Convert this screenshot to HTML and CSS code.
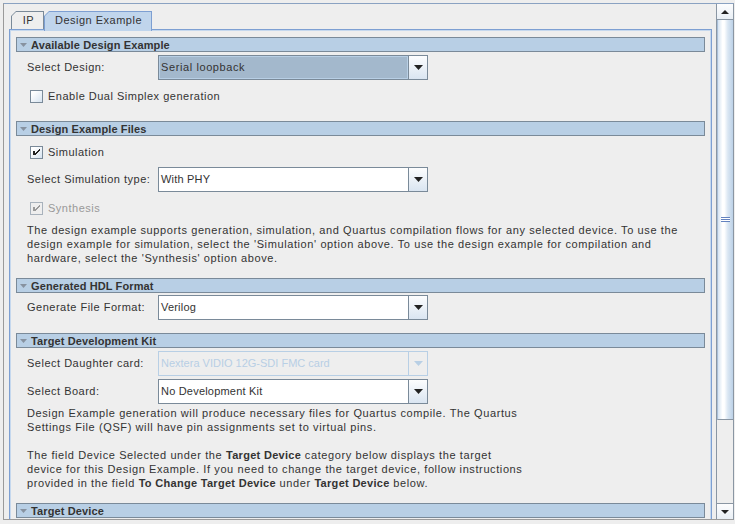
FILE: index.html
```html
<!DOCTYPE html>
<html>
<head>
<meta charset="utf-8">
<link rel="stylesheet" href="styles.css">
</head>
<body>
<div class="frame">
  <div class="viewport">
    <div class="tabs">
      <div class="tab"><span>IP</span></div>
      <div class="tab sel"><span>Design Example</span></div>
    </div>
    <div class="panel">
      <div class="hdr"><svg class="tri" width="7" height="4" viewBox="0 0 7 4"><polygon points="0,0 7,0 3.5,4"/></svg>Available Design Example</div>
      <div class="row m3"><label>Select Design:</label>
        <div class="combo focus"><div class="val">Serial loopback</div><div class="arrow"><svg width="9" height="5" viewBox="0 0 9 5"><polygon points="0,0 9,0 4.5,5"/></svg></div></div>
      </div>
      <div class="check m9"><span class="box"></span><span class="lbl">Enable Dual Simplex generation</span></div>

      <div class="hdr m17"><svg class="tri" width="7" height="4" viewBox="0 0 7 4"><polygon points="0,0 7,0 3.5,4"/></svg>Design Example Files</div>
      <div class="check m9"><span class="box"><svg width="11" height="11" viewBox="1 1 11 11" shape-rendering="crispEdges"><path d="M3 5h2v4H3z M9 3h1v2H9z M8 4h1v2H8z M7 5h1v2H7z M6 6h1v2H6z M5 7h1v2H5z"/></svg></span><span class="lbl">Simulation</span></div>
      <div class="row m7"><label>Select Simulation type:</label>
        <div class="combo"><div class="val">With PHY</div><div class="arrow"><svg width="9" height="5" viewBox="0 0 9 5"><polygon points="0,0 9,0 4.5,5"/></svg></div></div>
      </div>
      <div class="check disabled m9"><span class="box"><svg width="11" height="11" viewBox="1 1 11 11" shape-rendering="crispEdges"><path d="M3 5h2v4H3z M9 3h1v2H9z M8 4h1v2H8z M7 5h1v2H7z M6 6h1v2H6z M5 7h1v2H5z"/></svg></span><span class="lbl">Synthesis</span></div>
      <p class="desc m7">The design example supports generation, simulation, and Quartus compilation flows for any selected device. To use the<br>design example for simulation, select the 'Simulation' option above. To use the design example for compilation and<br>hardware, select the 'Synthesis' option above.</p>

      <div class="hdr m13"><svg class="tri" width="7" height="4" viewBox="0 0 7 4"><polygon points="0,0 7,0 3.5,4"/></svg>Generated HDL Format</div>
      <div class="row m2"><label>Generate File Format:</label>
        <div class="combo"><div class="val">Verilog</div><div class="arrow"><svg width="9" height="5" viewBox="0 0 9 5"><polygon points="0,0 9,0 4.5,5"/></svg></div></div>
      </div>

      <div class="hdr m13"><svg class="tri" width="7" height="4" viewBox="0 0 7 4"><polygon points="0,0 7,0 3.5,4"/></svg>Target Development Kit</div>
      <div class="row m3"><label>Select Daughter card:</label>
        <div class="combo disabled"><div class="val">Nextera VIDIO 12G-SDI FMC card</div><div class="arrow"><svg width="9" height="5" viewBox="0 0 9 5"><polygon points="0,0 9,0 4.5,5"/></svg></div></div>
      </div>
      <div class="row m3"><label>Select Board:</label>
        <div class="combo"><div class="val">No Development Kit</div><div class="arrow"><svg width="9" height="5" viewBox="0 0 9 5"><polygon points="0,0 9,0 4.5,5"/></svg></div></div>
      </div>
      <p class="desc m2">Design Example generation will produce necessary files for Quartus compile. The Quartus<br>Settings File (QSF) will have pin assignments set to virtual pins.<br>&nbsp;<br>The field Device Selected under the <b>Target Device</b> category below displays the target<br>device for this Design Example. If you need to change the target device, follow instructions<br>provided in the field <b>To Change Target Device</b> under <b>Target Device</b> below.</p>

      <div class="hdr m13"><svg class="tri" width="7" height="4" viewBox="0 0 7 4"><polygon points="0,0 7,0 3.5,4"/></svg>Target Device</div>
    </div>
  </div>
  <div class="vscroll">
    <div class="sb-btn up"><svg width="8" height="4" viewBox="0 0 8 4"><polygon points="0,4 8,4 4,0"/></svg></div>
    <div class="thumb"><span class="grip"></span></div>
    <div class="track"></div>
    <div class="sb-btn down"><svg width="8" height="4" viewBox="0 0 8 4"><polygon points="0,0 8,0 4,4"/></svg></div>
  </div>
</div>
</body>
</html>
```
FILE: styles.css
```css
* { box-sizing: border-box; }
html, body { margin: 0; padding: 0; }
body {
  background: #eeeeee;
  font-family: "Liberation Sans", Arial, sans-serif;
  font-size: 11px;
  color: #333333;
  width: 735px;
  height: 524px;
  overflow: hidden;
}
.frame {
  display: flex;
  width: 731px;
  height: 517px;
  margin: 3px 0 0 3px;
  border: 1px solid #9a9a9a;
  border-top-color: #8aa2c2;
  border-right-color: #8a96a3;
}
.viewport {
  width: 712px;
  height: 515px;
  overflow: hidden;
  padding: 7px 0 0 5px;
}

/* tabs */
.tabs {
  display: flex;
  height: 18px;
  margin-left: 2px;
  position: relative;
  z-index: 2;
  align-items: flex-start;
}
.tab {
  position: relative;
  height: 18px;
  background: #7a8a99;
  clip-path: polygon(0 5px, 5px 0, 100% 0, 100% 100%, 0 100%);
  display: flex;
  align-items: center;
  justify-content: center;
  letter-spacing: .5px;
  width: 33px;
  padding-left: 2px;
  padding-bottom: 1px;
}
.tab::before {
  content: "";
  position: absolute;
  inset: 1px 1px 0 1px;
  background: #eeeeee;
  clip-path: polygon(0 4px, 4px 0, 100% 0, 100% 100%, 0 100%);
}
.tab span { position: relative; }
.tab.sel {
  width: 108px;
  height: 20px;
  background: #7d9fd2;
  padding-left: 1px;
  padding-bottom: 3px;
}
.tab.sel::before { background: #c0d5ec; }

/* panel */
.panel {
  width: 703px;
  height: 620px;
  border: 1px solid #7d9fd2;
  box-shadow: inset 0 0 0 1px #c5d8ee;
  padding: 7px 6px 0 6px;
}
.hdr {
  height: 15px;
  border: 1px solid #7a8a99;
  background: #b8cfe5;
  display: flex;
  align-items: center;
  padding-left: 3px;
  font-weight: bold;
  letter-spacing: .12px;
  gap: 4px;
}
.tri { fill: #8792a0; flex: none; }

.m2 { margin-top: 2px; }
.m3 { margin-top: 3px; }
.m6 { margin-top: 6px; }
.m7 { margin-top: 7px; }
.m8 { margin-top: 8px; }
.m9 { margin-top: 9px; }
.m10 { margin-top: 10px; }
.m13 { margin-top: 13px; }
.m14 { margin-top: 14px; }
.m17 { margin-top: 17px; }

.row {
  display: flex;
  align-items: center;
  padding-left: 11px;
}
.row label {
  width: 131px;
  flex: none;
  letter-spacing: .5px;
  white-space: nowrap;
  padding-bottom: 1px;
}
.combo {
  width: 270px;
  height: 25px;
  flex: none;
  display: flex;
  border: 1px solid #7a8a99;
  background: #ffffff;
}
.combo .val {
  flex: 1;
  display: flex;
  align-items: center;
  padding-left: 2px;
  padding-bottom: 2px;
  letter-spacing: .2px;
  white-space: nowrap;
  overflow: hidden;
}
.combo .arrow {
  width: 19px;
  flex: none;
  border-left: 1px solid #7a8a99;
  background: linear-gradient(#fcfdfe, #dae5f1);
  display: flex;
  align-items: center;
  justify-content: center;
}
.combo .arrow svg { fill: #222; }
.combo.focus .val {
  background: #a3b8cc;
  box-shadow: inset 0 0 0 1px #b8cfe5;
  letter-spacing: .6px;
}
.combo.disabled {
  border-color: #b8cfe5;
  background: #eeeeee;
  color: #b8cfe5;
}
.combo.disabled .val { letter-spacing: 0; }
.combo.disabled .arrow {
  border-left-color: #b8cfe5;
  background: #eeeeee;
}
.combo.disabled .arrow svg { fill: #b8cfe5; }

.check {
  display: flex;
  align-items: center;
  height: 15px;
  padding-left: 14px;
  gap: 5px;
  letter-spacing: .5px;
}
.check .lbl { padding-bottom: 2px; }
.box {
  width: 13px;
  height: 13px;
  flex: none;
  border: 1px solid #7a8a99;
  background: linear-gradient(135deg, #ffffff 20%, #d6e3f0);
  display: flex;
}
.box svg { fill: #222; }
.check.disabled { color: #999999; }
.check.disabled .box { border-color: #a8b2bc; background: #eeeeee; }
.check.disabled .box svg { fill: #9a9a9a; }

.desc {
  margin-bottom: 0;
  padding-left: 11px;
  line-height: 14px;
  white-space: nowrap;
  letter-spacing: .6px;
}
.desc b { letter-spacing: .3px; }

/* scrollbar */
.vscroll {
  width: 17px;
  height: 515px;
  border-left: 1px solid #8a96a3;
  display: flex;
  flex-direction: column;
}
.sb-btn {
  height: 16px;
  flex: none;
  background: linear-gradient(#fdfdfe, #e9eff5);
  display: flex;
  align-items: center;
  justify-content: center;
}
.sb-btn svg { fill: #222; }
.sb-btn.up { border-bottom: 1px solid #8a96a3; }
.sb-btn.down { border-top: 1px solid #8a96a3; }
.thumb {
  height: 400px;
  flex: none;
  border-bottom: 1px solid #8a96a3;
  border-left: 1px solid #a9bfd8;
  background: linear-gradient(to right, #d6e4f2 0%, #ffffff 30%, #ffffff 42%, #dbe7f3 65%, #bcd1e7 100%);
  display: flex;
  align-items: center;
  justify-content: center;
}
.grip {
  width: 9px;
  height: 5px;
  background: repeating-linear-gradient(#6382bf 0 1px, #ffffff 1px 2px);
}
.track { flex: 1; }
```
